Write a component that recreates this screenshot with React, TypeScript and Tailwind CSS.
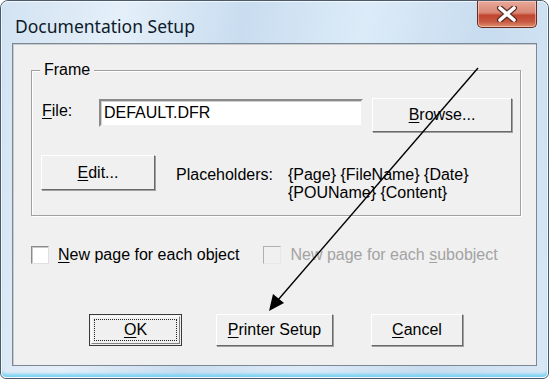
import React from "react";

const U = ({ c }: { c: string }) => <span className="underline underline-offset-2 decoration-1">{c}</span>;

function Btn({ children, w, h, cls = "" }: { children: React.ReactNode; w: string; h: string; cls?: string }) {
  return (
    <div className={`${w} ${h} ${cls} border border-t-white border-l-white border-r-[#696969] border-b-[#696969] shadow-[1px_1px_0_0_#a0a0a0] bg-[#f0f0f0] flex items-center justify-center text-[16px] text-black`}>
      {children}
    </div>
  );
}

export default function App() {
  return (
    <div className="relative w-[549px] h-[379px] bg-white overflow-hidden" style={{ fontFamily: '"Liberation Sans", Arial, sans-serif' }}>
      <div className="absolute inset-0 rounded-t-[8px] rounded-b-[6px] border border-[#4a5a6a] bg-[linear-gradient(100deg,#d3e3f2_0%,#e4eff9_20%,#c9ddf0_40%,#dcebf8_60%,#c7dcef_80%,#d8e8f6_100%)] flex flex-col">
        <div className="flex-1 flex flex-col rounded-t-[7px] rounded-b-[5px] border border-white/70 shadow-[inset_0_-4px_3px_-1px_#7dd3f3]">
          {/* title bar */}
          <div className="h-[40px] flex items-start justify-between shrink-0">
            <div className="pl-[13px] pt-[11px] text-[17.5px] text-[#0d1a2a] tracking-[0px]" style={{ fontFamily: '"Noto Sans", "Open Sans", sans-serif' }}>
              Documentation Setup
            </div>
            <div className="mr-[10px] -mt-[1px] w-[60px] h-[27px] rounded-b-[5px] border border-[#6b2b22] border-t-0 bg-[linear-gradient(180deg,#e9a99a_0%,#d88774_45%,#c2452f_55%,#c75a42_80%,#e08f6f_100%)] shadow-[inset_0_0_0_1px_rgba(255,230,220,0.5)] flex items-center justify-center">
              <svg width="22" height="16" viewBox="0 0 22 16">
                <path d="M4 2 L18 14 M18 2 L4 14" stroke="#5a2a22" strokeWidth="6" strokeLinecap="round" />
                <path d="M4 2 L18 14 M18 2 L4 14" stroke="#ffffff" strokeWidth="3.6" strokeLinecap="round" />
              </svg>
            </div>
          </div>
          {/* client */}
          <div className="mx-[10px] mb-[11px] mt-[1px] flex-1 border border-[#7b8793] bg-[#f0f0f0] shadow-[inset_1px_1px_0_0_#c8ccd0]">
            <div className="flex flex-col">
              {/* group box */}
              <div className="relative ml-[18px] mr-[15px] mt-[26px] h-[146px] border border-[#a0a0a0] shadow-[inset_1px_1px_0_0_#ffffff,1px_1px_0_0_#ffffff]">
                <div className="absolute -top-[11px] left-[8px] px-[4px] bg-[#f0f0f0] text-[16px] leading-[20px] text-black">Frame</div>
                <div className="flex items-start mt-[28px] ml-[10px]">
                  <div className="w-[57px] pt-[3px] text-[16px] leading-[18px]"><U c="F" />ile:</div>
                  <div className="w-[264px] h-[28px] bg-white border-2 border-t-[#8a8a8a] border-l-[#8a8a8a] border-r-[#f0f0f0] border-b-[#f0f0f0] shadow-[inset_1px_1px_0_0_#d0d0d0] text-[16px] leading-[22px] pl-[3px] pt-[1px]">DEFAULT.DFR</div>
                  <Btn w="w-[140px]" h="h-[34px]" cls="ml-[9px] -mt-[1px]"><span><U c="B" />rowse...</span></Btn>
                </div>
                <div className="flex items-start mt-[23px] ml-[9px]">
                  <Btn w="w-[114px]" h="h-[35px]"><span><U c="E" />dit...</span></Btn>
                  <div className="ml-[21px] pt-[11px] text-[16px] leading-[18px]">Placeholders:</div>
                  <div className="ml-[15px] pt-[11px] text-[16px] leading-[18px]">
                    <div>{"{Page} {FileName} {Date}"}</div>
                    <div>{"{POUName} {Content}"}</div>
                  </div>
                </div>
              </div>
              {/* checkboxes */}
              <div className="flex items-center mt-[30px] ml-[18px]">
                <div className="w-[18px] h-[18px] bg-white border border-t-[#8a8a8a] border-l-[#8a8a8a] border-r-[#e0e0e0] border-b-[#e0e0e0] shadow-[inset_1px_1px_0_0_#c8c8c8]" />
                <div className="ml-[9px] text-[16px] leading-[18px]"><U c="N" />ew page for each object</div>
                <div className="ml-[24px] w-[18px] h-[18px] bg-[#f0f0f0] border border-t-[#b0b0b0] border-l-[#b0b0b0] border-r-[#e8e8e8] border-b-[#e8e8e8]" />
                <div className="ml-[9px] text-[16px] leading-[18px] text-[#a3a3a3]">New page for each <U c="s" />ubobject</div>
              </div>
              {/* buttons */}
              <div className="flex items-start mt-[50px] ml-[76px]">
                <div className="w-[93px] h-[32px] border border-[#3a3a3a] bg-[#f0f0f0] p-[1px]">
                  <div className="w-full h-full border border-t-white border-l-white border-r-[#808080] border-b-[#808080] p-[2px]">
                    <div className="w-full h-full border border-dotted border-[#222] flex items-center justify-center text-[16px]"><span><U c="O" />K</span></div>
                  </div>
                </div>
                <Btn w="w-[117px]" h="h-[32px]" cls="ml-[34px]"><span><U c="P" />rinter Setup</span></Btn>
                <Btn w="w-[92px]" h="h-[32px]" cls="ml-[38px]"><span><U c="C" />ancel</span></Btn>
              </div>
            </div>
          </div>
        </div>
      </div>
      {/* annotation arrow */}
      <svg className="absolute inset-0 pointer-events-none" width="549" height="379" viewBox="0 0 549 379">
        <line x1="478" y1="68" x2="278" y2="300" stroke="#000" strokeWidth="1.4" />
        <polygon points="269,311 273,294 284,303" fill="#000" />
      </svg>
    </div>
  );
}
